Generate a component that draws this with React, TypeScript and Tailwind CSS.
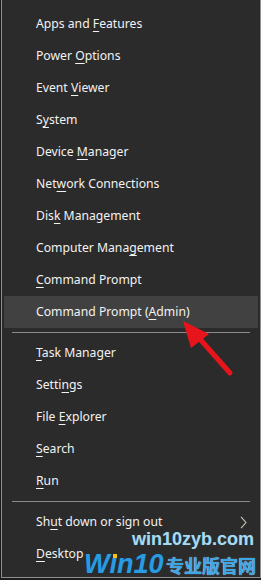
import type { ReactNode } from "react";

type Item = { label: ReactNode; highlighted?: boolean; submenu?: boolean } | "sep";

// underline the access key character
const k = (before: string, key: string, after: string) => (
  <>
    {before}
    <span className="underline underline-offset-[3px] decoration-1">{key}</span>
    {after}
  </>
);

const items: Item[] = [
  { label: k("Apps and ", "F", "eatures") },
  { label: k("Power ", "O", "ptions") },
  { label: k("Event ", "V", "iewer") },
  { label: k("S", "y", "stem") },
  { label: k("Device ", "M", "anager") },
  { label: k("Net", "w", "ork Connections") },
  { label: k("Dis", "k", " Management") },
  { label: k("Computer Mana", "g", "ement") },
  { label: k("", "C", "ommand Prompt") },
  { label: k("Command Prompt (", "A", "dmin)"), highlighted: true },
  "sep",
  { label: k("", "T", "ask Manager") },
  { label: k("Setti", "n", "gs") },
  { label: k("File ", "E", "xplorer") },
  { label: k("", "S", "earch") },
  { label: k("", "R", "un") },
  "sep",
  { label: k("Sh", "u", "t down or sign out"), submenu: true },
  { label: k("", "D", "esktop") },
];

function Chevron() {
  return (
    <svg width="7" height="13" viewBox="0 0 7 13" fill="none" stroke="#cfc6b8" strokeWidth="1.1" aria-hidden>
      <path d="M1 0.8 L6 6.5 L1 12.2" />
    </svg>
  );
}

function Arrow() {
  return (
    <svg className="pointer-events-none absolute left-0 top-0" width="261" height="580" aria-hidden>
      <line x1="199" y1="338" x2="230" y2="373" stroke="#e8141c" strokeWidth="5" strokeLinecap="round" />
      <polygon points="183,321 191,348 209,334" fill="#e8141c" />
    </svg>
  );
}

function Watermark() {
  return (
    <div className="pointer-events-none absolute left-[84px] top-[528px] flex w-[176px] flex-col items-end">
      <div
        className="mr-[6px] text-[18px] font-bold leading-[22px] text-[#a9d9ef]"
        style={{ fontFamily: '"Liberation Sans", Arial, sans-serif', textShadow: "0 0 1px #2a5f7a" }}
      >
        win10zyb.com
      </div>
      <div className="flex w-full items-end justify-between">
        <span
          className="relative text-[27px] font-bold italic leading-[28px] text-[#2a9be0]"
          style={{ fontFamily: '"Liberation Sans", Arial, sans-serif', textShadow: "0 0 1px #0b4a78" }}
        >
          W<span className="relative">ı<span className="absolute left-[4px] top-[5px] h-[4px] w-[4px] bg-[#f2c21a]" /></span>n10
        </span>
        <span
          className="mb-[2px] mr-[4px] text-[18px] font-bold leading-[22px] text-[#3fa6e6]"
          style={{ fontFamily: '"Noto Sans CJK SC", sans-serif', textShadow: "0 0 1px #bfe4f7" }}
        >
          专业版官网
        </span>
      </div>
    </div>
  );
}

export default function App() {
  return (
    <div className="relative h-[580px] w-[261px] overflow-hidden bg-[#1c1c1c] pb-[2px] pl-px">
      <div
        className="h-full border-b border-l border-r border-[#8e8e8e] bg-[#2b2b2b] pt-2 text-[12.2px] text-[#f2f2f2]"
        style={{ fontFamily: '"Noto Sans", "Open Sans", sans-serif' }}
      >
        <div className="px-[2px]">
          {items.map((it, i) =>
            it === "sep" ? (
              <div key={i} className="px-2 py-1">
                <div className="h-px bg-[#8a8a8a]" />
              </div>
            ) : (
              <div
                key={i}
                className={
                  "flex h-8 items-center justify-between pl-[32px] pr-[11px] pt-px " +
                  (it.highlighted ? "bg-[#414141]" : "")
                }
              >
                <span>{it.label}</span>
                {it.submenu && <Chevron />}
              </div>
            )
          )}
        </div>
      </div>
      <Arrow />
      <Watermark />
    </div>
  );
}
